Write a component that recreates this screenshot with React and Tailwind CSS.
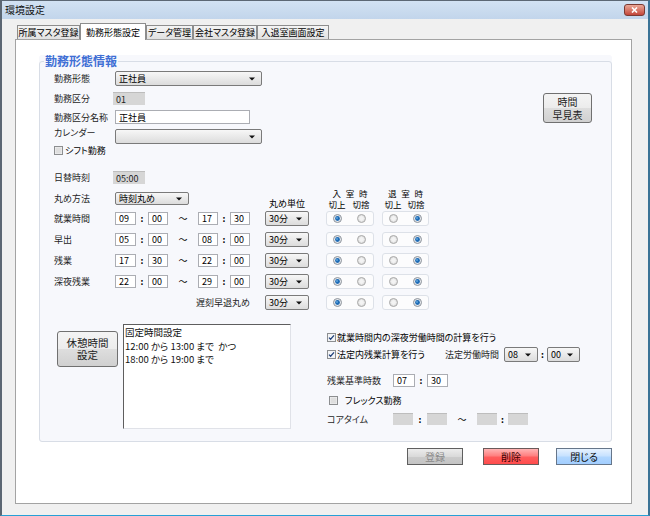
import React from 'react';

const rows = [
  ['就業時間', '09', '00', '17', '30'],
  ['早出', '05', '00', '08', '00'],
  ['残業', '17', '30', '22', '00'],
  ['深夜残業', '22', '00', '29', '00'],
];

function Arrow() {
  return (
    <svg width="6" height="4" viewBox="0 0 6 4" className="shrink-0">
      <path d="M0 0.5h6L3 3.5z" fill="#111" />
    </svg>
  );
}

function Select({ className = '', value }) {
  return (
    <div
      className={`flex shrink-0 items-center justify-between rounded-[2px] border border-[#7a7a7a] bg-linear-to-b from-[#f7f7f7] to-[#dcdcdc] pl-[3px] pr-[6px] text-[9px] leading-none ${className}`}
    >
      <span>{value}</span>
      <Arrow />
    </div>
  );
}

function TextBox({ className = '', value }) {
  return (
    <div
      className={`flex shrink-0 items-center border border-[#abadb3] bg-white pl-[3px] text-[9px] leading-none ${className}`}
    >
      {value}
    </div>
  );
}

function GreyBox({ className = '', value }) {
  return (
    <div
      className={`flex shrink-0 items-center border-t border-[#bdbdbd] bg-[#d6d6d6] pl-[3px] text-[9px] leading-none text-[#222] ${className}`}
    >
      {value}
    </div>
  );
}

function Colon({ className = '' }) {
  return <div className={`shrink-0 text-center text-[9px] font-bold leading-none ${className}`}>:</div>;
}

function Label({ children, className = 'w-[61px]' }) {
  return <div className={`shrink-0 text-[9px] leading-none text-[#1e1e1e] ${className}`}>{children}</div>;
}

function Radio({ on }) {
  return on ? (
    <svg width="9" height="9" viewBox="0 0 9 9" className="shrink-0">
      <circle cx="4.5" cy="4.5" r="4" fill="#e6e9ed" stroke="#8d939b" />
      <circle cx="4.5" cy="4.5" r="2.4" fill="#1d6bb6" />
      <circle cx="4" cy="4" r="0.8" fill="#8cc8f2" />
    </svg>
  ) : (
    <svg width="9" height="9" viewBox="0 0 9 9" className="shrink-0">
      <circle cx="4.5" cy="4.5" r="4" fill="#e2e2e2" stroke="#a8a8a8" />
      <circle cx="4.5" cy="4.5" r="2.4" fill="#f3f3f3" />
    </svg>
  );
}

function RadioBox({ className = '', a, b }) {
  return (
    <div
      className={`flex h-[15px] shrink-0 items-center gap-[15px] rounded-[3px] border border-[#dde1e8] bg-[#fcfcfd] pl-[6px] ${className}`}
    >
      <Radio on={a} />
      <Radio on={b} />
    </div>
  );
}

function Check({ on }) {
  return (
    <svg width="9" height="9" viewBox="0 0 9 9" className="shrink-0">
      <rect x="0.5" y="0.5" width="8" height="8" fill="#f2f3f4" stroke="#8c8e90" />
      <rect x="1.5" y="1.5" width="6" height="6" fill={on ? '#f4f5f7' : '#dedede'} />
      {on && <path d="M2 4.6l1.6 1.7L7 2.4" fill="none" stroke="#21427c" strokeWidth="1.3" />}
    </svg>
  );
}

function Tab({ children, active, className = '' }) {
  return active ? (
    <div
      className={`relative z-10 -mb-px flex h-[17px] items-center justify-center border border-b-0 border-[#8d8d8d] bg-white text-[9px] leading-none ${className}`}
    >
      {children}
    </div>
  ) : (
    <div
      className={`flex h-[14px] items-center justify-center border border-b-0 border-[#8d8d8d] bg-linear-to-b from-[#f4f4f4] to-[#e1e1e1] text-[9px] leading-none ${className}`}
    >
      {children}
    </div>
  );
}

export default function App() {
  return (
    <div className="flex h-[516px] w-[650px] flex-col overflow-hidden border-t border-b border-l-2 border-r-2 border-t-[#5c6875] border-b-[#27a0d6] border-l-[#5b6673] border-r-[#3b7396] bg-[#f0f0f0] font-['Noto_Sans_CJK_JP','Liberation_Sans',sans-serif] text-black [font-feature-settings:'palt']">
      {/* title bar */}
      <div className="flex h-[18px] shrink-0 items-center justify-between bg-linear-to-b from-[#d2e2f3] to-[#c2d5eb] pl-[3px] pr-[3px]">
        <span className="text-[10px] leading-none text-[#111]">環境設定</span>
        <div className="flex h-[12px] w-[21px] items-center justify-center rounded-[3px] border border-[#7b3a32] bg-linear-to-b from-[#eaa898] to-[#c2443a]">
          <svg width="7" height="6" viewBox="0 0 7 6">
            <path d="M1 0.5l5 5M6 0.5l-5 5" stroke="#fff" strokeWidth="1.6" />
          </svg>
        </div>
      </div>

      {/* client */}
      <div className="flex flex-1 flex-col pl-[13px] pr-[16px] pt-[4px]">
        <div className="flex h-[16px] items-end pl-[2px]">
          <Tab className="w-[63px]">所属マスタ登録</Tab>
          <Tab active className="w-[66px]">勤務形態設定</Tab>
          <Tab className="w-[47px]">データ管理</Tab>
          <Tab className="w-[64px]">会社マスタ登録</Tab>
          <Tab className="w-[72px]">入退室画面設定</Tab>
        </div>

        <div className="h-[465px] border border-[#a3a3a3] bg-white pl-[23px] pt-[15px]">
          <div className="h-[387px] w-[573px] rounded-[3px] bg-[#f7f8fc]">
            <fieldset className="h-full w-full rounded-[3px] border border-[#d8dde6]">
              <legend className="ml-[4px] px-[1px] text-[12px] font-bold leading-[12px] text-[#3f6fd5]">勤務形態情報</legend>

              <div className="flex flex-col pl-[14px]">
                {/* top block */}
                <div className="flex">
                  <div className="flex flex-col">
                    <div className="mt-[4px] flex h-[15px] items-center">
                      <Label>勤務形態</Label>
                      <Select className="h-[15px] w-[147px]" value="正社員" />
                    </div>
                    <div className="mt-[6px] flex h-[13px] items-center">
                      <Label className="w-[59px]">勤務区分</Label>
                      <GreyBox className="h-[13px] w-[32px]" value="01" />
                    </div>
                    <div className="mt-[5px] flex h-[14px] items-center">
                      <Label>勤務区分名称</Label>
                      <TextBox className="h-[14px] w-[135px]" value="正社員" />
                    </div>
                    <div className="mt-[5px] flex h-[15px] items-start">
                      <Label className="-mt-[1px] w-[61px]">カレンダー</Label>
                      <Select className="h-[15px] w-[147px]" value="" />
                    </div>
                    <div className="mt-[2px] flex h-[9px] items-center gap-[2px]">
                      <Check />
                      <span className="text-[9px] leading-none">シフト勤務</span>
                    </div>
                  </div>
                  <button className="ml-auto mr-[19px] mt-[26px] flex h-[30px] w-[49px] flex-col items-center justify-center gap-[3px] rounded-[3px] border border-[#707070] bg-[linear-gradient(#f4f4f4_0%,#ececec_50%,#dedede_50%,#d0d0d0_100%)] text-[10px] leading-none text-[#222]">
                    <span>時間</span>
                    <span>早見表</span>
                  </button>
                </div>

                <div className="mt-[16px] flex h-[13px] items-center">
                  <Label className="w-[59px]">日替時刻</Label>
                  <GreyBox className="h-[13px] w-[32px]" value="05:00" />
                </div>

                {/* header row */}
                <div className="mt-[4px] flex h-[21px]">
                  <div className="flex items-center">
                    <Label>丸め方法</Label>
                    <Select className="h-[13px] w-[74px]" value="時刻丸め" />
                  </div>
                  <div className="ml-[76px] flex w-[44px] items-end justify-center pb-[1px] text-[9px] leading-none">丸め単位</div>
                  <div className="ml-[17px] flex w-[48px] flex-col justify-between pt-[1px] text-[8.5px] leading-[9px]">
                    <div className="mx-auto flex w-[35px] justify-between">
                      <span>入</span>
                      <span>室</span>
                      <span>時</span>
                    </div>
                    <div className="flex gap-[2px]">
                      <span className="w-[22px] text-center">切上</span>
                      <span className="w-[22px] text-center">切捨</span>
                    </div>
                  </div>
                  <div className="ml-[8px] flex w-[47px] flex-col justify-between pt-[1px] text-[8.5px] leading-[9px]">
                    <div className="mx-auto flex w-[35px] justify-between">
                      <span>退</span>
                      <span>室</span>
                      <span>時</span>
                    </div>
                    <div className="flex gap-[1px]">
                      <span className="w-[22px] text-center">切上</span>
                      <span className="w-[22px] text-center">切捨</span>
                    </div>
                  </div>
                </div>

                {/* time rows */}
                <div className="mt-[2px] flex flex-col gap-[6px]">
                  {rows.map(([name, a, b, c, d]) => (
                    <div key={name} className="flex h-[15px] items-center">
                      <Label>{name}</Label>
                      <TextBox className="h-[13px] w-[21px]" value={a} />
                      <Colon className="w-[12px]" />
                      <TextBox className="h-[13px] w-[20px]" value={b} />
                      <div className="w-[30px] shrink-0 text-center text-[9px] leading-none">～</div>
                      <TextBox className="h-[13px] w-[20px]" value={c} />
                      <Colon className="w-[12px]" />
                      <TextBox className="h-[13px] w-[20px]" value={d} />
                      <Select className="ml-[15px] h-[15px] w-[44px]" value="30分" />
                      <RadioBox className="ml-[17px] w-[48px]" a b={false} />
                      <RadioBox className="ml-[8px] w-[47px]" a={false} b />
                    </div>
                  ))}
                  <div className="flex h-[15px] items-center">
                    <Label className="w-[196px] text-right">遅刻早退丸め</Label>
                    <Select className="ml-[15px] h-[15px] w-[44px]" value="30分" />
                    <RadioBox className="ml-[17px] w-[48px]" a b={false} />
                    <RadioBox className="ml-[8px] w-[47px]" a={false} b />
                  </div>
                </div>

                {/* bottom block */}
                <div className="mt-[14px] flex items-start">
                  <button className="ml-[3px] mt-[7px] flex h-[36px] w-[61px] shrink-0 flex-col items-center justify-center gap-[2px] rounded-[3px] border border-[#707070] bg-[linear-gradient(#f4f4f4_0%,#ececec_50%,#dedede_50%,#d0d0d0_100%)] text-[10.5px] leading-none text-[#222]">
                    <span>休憩時間</span>
                    <span>設定</span>
                  </button>
                  <div className="ml-[5px] h-[105px] w-[168px] shrink-0 border border-[#e0e2e8] border-l-[#5e5e5e] border-t-[#5e5e5e] bg-white pl-[1px] pt-[1px] text-[9.5px] leading-[13.5px] text-[#111]">
                    <div>固定時間設定</div>
                    <div className="whitespace-pre">12:00 から 13:00 まで  かつ</div>
                    <div>18:00 から 19:00 まで</div>
                  </div>

                  <div className="ml-[36px] flex flex-col">
                    <div className="mt-[9px] flex h-[9px] items-center gap-[1px]">
                      <Check on />
                      <span className="text-[9px] leading-none">就業時間内の深夜労働時間の計算を行う</span>
                    </div>
                    <div className="mt-[5px] flex h-[15px] items-center">
                      <Check on />
                      <span className="ml-[1px] w-[108px] shrink-0 text-[9px] leading-none">法定内残業計算を行う</span>
                      <Label className="w-[59px]">法定労働時間</Label>
                      <Select className="h-[15px] w-[34px]" value="08" />
                      <Colon className="w-[9px]" />
                      <Select className="h-[15px] w-[33px]" value="00" />
                    </div>
                    <div className="mt-[12px] flex h-[13px] items-center">
                      <Label className="w-[66px]">残業基準時数</Label>
                      <TextBox className="h-[13px] w-[22px]" value="07" />
                      <Colon className="w-[12px]" />
                      <TextBox className="h-[13px] w-[21px]" value="30" />
                    </div>
                    <div className="ml-[2px] mt-[9px] flex h-[9px] items-center gap-[7px]">
                      <Check />
                      <span className="text-[9px] leading-none">フレックス勤務</span>
                    </div>
                    <div className="mt-[8px] flex h-[12px] items-center">
                      <Label className="w-[66px]">コアタイム</Label>
                      <GreyBox className="h-[12px] w-[20px]" value="" />
                      <Colon className="w-[14px]" />
                      <GreyBox className="h-[12px] w-[20px]" value="" />
                      <div className="w-[30px] shrink-0 text-center text-[9px] leading-none">～</div>
                      <GreyBox className="h-[12px] w-[20px]" value="" />
                      <Colon className="w-[11px]" />
                      <GreyBox className="h-[12px] w-[20px]" value="" />
                    </div>
                  </div>
                </div>
              </div>
            </fieldset>
          </div>

          {/* action buttons */}
          <div className="mt-[6px] flex w-[573px] justify-end">
            <button className="flex h-[17px] w-[56px] items-center justify-center border border-[#5f5f5f] bg-[linear-gradient(#ececec_0%,#dadada_50%,#cbcbcb_55%,#c4c4c4_100%)] text-[10px] leading-none text-[#8a8a8a]">
              登録
            </button>
            <button className="ml-[20px] flex h-[17px] w-[56px] items-center justify-center border border-[#6a5a5a] bg-[linear-gradient(#ffb4b4_0%,#ff8080_45%,#ff5c5c_55%,#ff4c4c_100%)] text-[10px] leading-none text-[#3a0000]">
              削除
            </button>
            <button className="ml-[17px] flex h-[17px] w-[56px] items-center justify-center border border-[#66768a] bg-[linear-gradient(#e6f2ff_0%,#c8e2ff_45%,#b0d6ff_55%,#a2ceff_100%)] text-[10px] leading-none text-[#0c0c0c]">
              閉じる
            </button>
          </div>
        </div>
      </div>
    </div>
  );
}
